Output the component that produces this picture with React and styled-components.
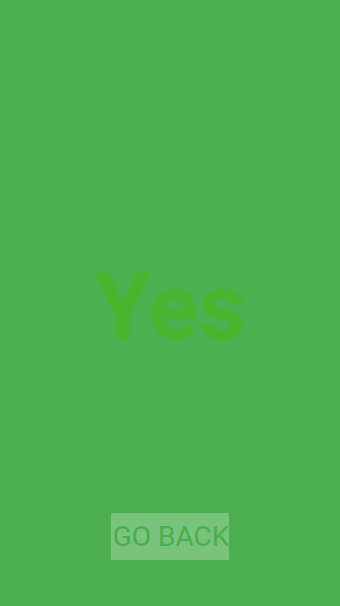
import styled, { createGlobalStyle } from 'styled-components';

const GlobalStyle = createGlobalStyle`
  html, body {
    margin: 0;
    padding: 0;
    height: 100%;
    background: #4caf50;
  }
  #root {
    height: 100%;
  }
`;

const Screen = styled.div`
  display: flex;
  flex-direction: column;
  align-items: center;
  height: 100vh;
  background: #4caf50;
  font-family: Roboto, 'Liberation Sans', sans-serif;
`;

const Answer = styled.h1`
  margin: 0;
  padding-top: 261px;
  font-size: 93px;
  line-height: 93px;
  font-weight: 700;
  color: #4bb42e;
`;

const Spacer = styled.div`
  flex: 1;
`;

const BackButton = styled.button`
  display: flex;
  align-items: center;
  justify-content: center;
  width: 118px;
  height: 47px;
  margin-bottom: 46px;
  padding: 0 0 0 2px;
  border: none;
  background: rgba(255, 255, 255, 0.25);
  color: #4aad4e;
  font-family: Roboto, 'Liberation Sans', sans-serif;
  font-size: 28px;
  font-weight: 400;
  white-space: nowrap;
  overflow: visible;
  cursor: pointer;
`;

export default function App() {
  return (
    <>
      <GlobalStyle />
      <Screen>
        <Answer>Yes</Answer>
        <Spacer />
        <BackButton>GO BACK</BackButton>
      </Screen>
    </>
  );
}
